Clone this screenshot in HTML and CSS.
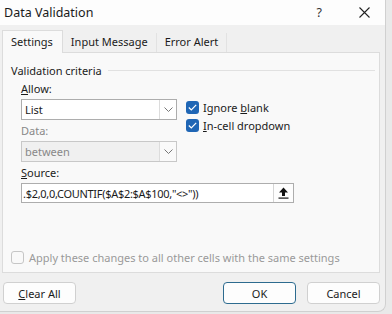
FILE: index.html
```html
<!DOCTYPE html>
<html>
<head>
<meta charset="utf-8">
<link rel="stylesheet" href="styles.css">
</head>
<body>
<div class="dialog">
  <div class="titlebar">
    <span class="title">Data Validation</span>
    <span class="help">?</span>
    <svg class="close" width="11" height="11" viewBox="0 0 11 11"><path d="M0.5 0.5 L10.5 10.5 M10.5 0.5 L0.5 10.5" stroke="#222" stroke-width="1.1"/></svg>
  </div>
  <div class="body">
    <div class="tabs">
      <div class="tab active">Settings</div>
      <div class="tab">Input Message</div>
      <div class="tab">Error Alert</div>
    </div>
    <div class="panel">
      <div class="group-title"><span>Validation criteria</span><span class="rule"></span></div>
      <div class="criteria">
        <div class="left">
          <div class="label"><u>A</u>llow:</div>
          <div class="select"><span class="value">List</span><span class="arrow"><svg width="9" height="6" viewBox="0 0 9 6"><path d="M0.5 0.5 L4.5 4.5 L8.5 0.5" fill="none" stroke="#777" stroke-width="1"/></svg></span></div>
          <div class="label disabled">Data:</div>
          <div class="select dis"><span class="value">between</span><span class="arrow"><svg width="9" height="6" viewBox="0 0 9 6"><path d="M0.5 0.5 L4.5 4.5 L8.5 0.5" fill="none" stroke="#777" stroke-width="1"/></svg></span></div>
        </div>
        <div class="right">
          <div class="check"><span class="box on"><svg width="9" height="7" viewBox="0 0 9 7"><path d="M0.8 3.5 L3.3 6 L8.2 0.8" fill="none" stroke="#fff" stroke-width="1.2"/></svg></span><span>Ignore <u>b</u>lank</span></div>
          <div class="check"><span class="box on"><svg width="9" height="7" viewBox="0 0 9 7"><path d="M0.8 3.5 L3.3 6 L8.2 0.8" fill="none" stroke="#fff" stroke-width="1.2"/></svg></span><span><u>I</u>n-cell dropdown</span></div>
        </div>
      </div>
      <div class="label src"><u>S</u>ource:</div>
      <div class="source">
        <span class="formula">.$2,0,0,COUNTIF($A$2:$A$100,"&lt;&gt;"))</span>
        <span class="pick"><svg width="11" height="12" viewBox="0 0 11 12"><path d="M5.5 0.5 L10 5.5 L7 5.5 L7 9 L4 9 L4 5.5 L1 5.5 Z" fill="#111"/><rect x="0.5" y="10.5" width="10" height="1.2" fill="#111"/></svg></span>
      </div>
      <div class="apply"><span class="box off"></span><span>Apply these changes to all other cells with the same settings</span></div>
    </div>
    <div class="buttons">
      <div class="btn"><u>C</u>lear All</div>
      <div class="spacer"></div>
      <div class="btn ok">OK</div>
      <div class="btn">Cancel</div>
    </div>
  </div>
</div>
</body>
</html>
```
FILE: styles.css
```css
html, body {
  margin: 0;
  padding: 0;
}
body {
  width: 392px;
  height: 314px;
  background: #e9e9e9;
  font-family: "Noto Sans", "Open Sans", sans-serif;
  font-size: 11px;
  color: #1b1b1b;
  overflow: hidden;
}
.dialog {
  width: 386px;
  height: 312px;
  background: #f0f0f0;
  border-right: 1px solid #d0d0d0;
  border-bottom: 1px solid #d0d0d0;
  border-bottom-right-radius: 8px;
  box-sizing: border-box;
  display: flex;
  flex-direction: column;
  overflow: hidden;
}
.titlebar {
  height: 25px;
  background: #fdfdfd;
  display: flex;
  align-items: center;
  padding-left: 4px;
  flex: none;
}
.title {
  font-size: 12.5px;
  color: #1a1a1a;
  flex: 1;
}
.help {
  font-size: 12.5px;
  margin-right: 37px;
  color: #333;
}
.close {
  margin-right: 15px;
}
.body {
  flex: 1;
  display: flex;
  flex-direction: column;
  padding: 6px 5px 0 2px;
}
.tabs {
  display: flex;
  height: 21px;
  align-items: flex-end;
}
.tab {
  height: 19px;
  line-height: 18px;
  padding: 0 8px;
  color: #1b1b1b;
  border-right: 1px solid #e2e2e2;
  background: #f0f0f0;
}
.tab.active {
  height: 22px;
  line-height: 22px;
  background: #f9f9f9;
  border: 1px solid #dcdcdc;
  border-bottom: none;
  padding: 0 9px 0 8px;
  position: relative;
  z-index: 1;
  margin-bottom: -1px;
}
.panel {
  background: #f9f9f9;
  border: 1px solid #dcdcdc;
  height: 221px;
  box-sizing: border-box;
  padding: 9px 4px 0 8px;
  width: 378px;
}
.group-title {
  display: flex;
  align-items: center;
  gap: 6px;
  height: 16px;
}
.group-title .rule {
  flex: 1;
  border-top: 1px solid #e1e1e1;
}
.criteria {
  display: flex;
  padding-left: 10px;
}
.left {
  width: 156px;
}
.label {
  height: 16px;
  line-height: 16px;
  margin-top: 3px;
}
.label.disabled {
  color: #888;
  margin-top: 3px;
}
.select {
  display: flex;
  height: 21px;
  box-sizing: border-box;
  border: 1px solid #adadad;
  background: #fff;
  margin-top: 2px;
}
.select .value {
  flex: 1;
  line-height: 19px;
  padding-left: 3px;
}
.select .arrow {
  width: 16px;
  border-left: 1px solid #dcdcdc;
  display: flex;
  align-items: center;
  justify-content: center;
}
.select.dis {
  background: #f0f0f0;
  border-color: #c8c8c8;
}
.select.dis .value {
  color: #888;
}
.select.dis .arrow {
  background: #fafafa;
}
.right {
  padding-left: 9px;
  padding-top: 23px;
  display: flex;
  flex-direction: column;
  gap: 5px;
}
.check {
  display: flex;
  align-items: center;
  gap: 4px;
  height: 13px;
}
.box {
  width: 13px;
  height: 13px;
  border-radius: 3px;
  box-sizing: border-box;
  display: inline-flex;
  align-items: center;
  justify-content: center;
  flex: none;
}
.box.on {
  background: #1f66b5;
}
.box.off {
  border: 1px solid #c6c6c6;
  background: #f9f9f9;
}
.label.src {
  margin-left: 10px;
  margin-top: 3px;
}
.source {
  margin-left: 10px;
  margin-top: 2px;
  width: 273px;
  height: 20px;
  box-sizing: border-box;
  border: 1px solid #adadad;
  background: #fff;
  display: flex;
  align-items: center;
}
.formula {
  flex: 1;
  padding-left: 1px;
  white-space: nowrap;
  overflow: hidden;
  letter-spacing: -0.3px;
}
.pick {
  width: 20px;
  height: 18px;
  box-sizing: border-box;
  border-left: 1px solid #d5d5d5;
  background: #fdfdfd;
  display: flex;
  align-items: center;
  justify-content: center;
}
.apply {
  margin-top: 47px;
  display: flex;
  align-items: center;
  gap: 5px;
  color: #9a9a9a;
}
.buttons {
  display: flex;
  margin-top: 9px;
  gap: 11px;
  padding-left: 1px;
}
.spacer {
  flex: 1;
}
.btn {
  width: 73px;
  height: 22px;
  box-sizing: border-box;
  border: 1px solid #d0d0d0;
  border-radius: 4px;
  background: #fdfdfd;
  display: flex;
  align-items: center;
  justify-content: center;
}
.btn.ok {
  border-color: #2d6b8f;
}
```
